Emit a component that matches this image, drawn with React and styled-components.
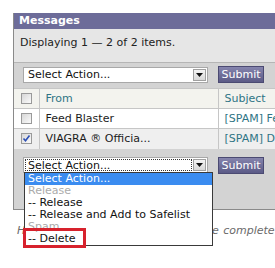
import React from "react";
import styled, { createGlobalStyle } from "styled-components";

const GlobalStyle = createGlobalStyle`
  html, body {
    margin: 0;
    padding: 0;
    background: #ffffff;
  }
  body {
    font-family: "DejaVu Sans", Verdana, sans-serif;
    font-size: 11px;
    color: #222;
  }
`;

const Page = styled.div`
  position: relative;
  width: 275px;
  height: 268px;
  overflow: hidden;
  padding: 13px 0 0 13px;
  box-sizing: border-box;
`;

const Panel = styled.div`
  width: 300px;
  display: flex;
  flex-direction: column;
  border-left: 1px solid #8a8a8a;
  border-bottom: 1px solid #8a8a8a;
  background: #d3d3d3;
`;

const Header = styled.div`
  height: 16px;
  line-height: 16px;
  padding-left: 5px;
  background: #6d6c99;
  color: #ffffff;
  font-weight: bold;
  font-size: 11px;
`;

const InfoRow = styled.div`
  height: 34px;
  display: flex;
  align-items: center;
  padding-left: 6px;
  padding-bottom: 6px;
  background: #e6e6e6;
  border-bottom: 1px solid #b5b5b5;
  font-size: 11px;
  box-sizing: border-box;
`;

const ActionBar = styled.div`
  display: flex;
  align-items: center;
  gap: 10px;
  padding: ${(p) => (p.bottom ? "8px 0 35px 9px" : "3px 0 5px 9px")};
  background: #d3d3d3;
`;

const SelectBox = styled.div`
  width: 185px;
  height: 16px;
  display: flex;
  align-items: center;
  background: #ffffff;
  border: 1px solid #a8a8a8;
  box-sizing: border-box;
  padding: 1px;
`;

const SelectText = styled.div`
  flex: 1;
  height: 100%;
  display: flex;
  align-items: center;
  padding-left: 3px;
  box-sizing: border-box;
  outline: ${(p) => (p.focused ? "1px dotted #333" : "none")};
  outline-offset: -1px;
  font-size: 11px;
  color: #111;
`;

const ArrowButton = styled.div`
  width: 13px;
  height: 12px;
  margin-left: 1px;
  display: flex;
  align-items: center;
  justify-content: center;
  background: linear-gradient(#f4f4f4, #d8d8d8);
  border: 1px solid #a0a0a0;
  box-sizing: border-box;
`;

const SubmitButton = styled.button`
  width: 46px;
  height: 17px;
  padding: 0;
  border: 1px solid #4b4a72;
  background: linear-gradient(#8584ad, #5b5a86);
  color: #ffffff;
  font-family: "DejaVu Sans", Verdana, sans-serif;
  font-size: 11px;
  line-height: 15px;
`;

const Table = styled.table`
  border-collapse: collapse;
  table-layout: fixed;
  width: 100%;
  font-size: 11px;
`;

const Row = styled.tr`
  height: 20px;
  background: ${(p) => p.bg};
`;

const Cell = styled.td`
  padding: 0 0 0 6px;
  border-top: 1px solid #c6c6c6;
  border-left: 1px solid #c6c6c6;
  white-space: nowrap;
  overflow: hidden;
  color: ${(p) => p.color || "#1c1c1c"};
  box-sizing: border-box;
  &:first-child {
    border-left: none;
    padding: 0;
    text-align: center;
  }
`;

const Check = styled.span`
  display: inline-block;
  vertical-align: middle;
  width: 11px;
  height: 11px;
  box-sizing: border-box;
  border: 1px solid #9a9a9a;
  background: linear-gradient(135deg, #d6d6d6, #fbfbfb);
  position: relative;
  margin-top: -2px;
`;

const HelpText = styled.div`
  margin: 14px 0 0 4px;
  font-style: italic;
  color: #6a6a6a;
  white-space: nowrap;
  word-spacing: 0.8px;
  font-size: 11px;
`;

const Dropdown = styled.div`
  position: absolute;
  left: 24px;
  top: 172px;
  width: 189px;
  background: #ffffff;
  border: 1px solid #3a3a3a;
  box-sizing: border-box;
  font-size: 11px;
`;

const Option = styled.div`
  height: 12px;
  line-height: 12px;
  padding-left: 3px;
  white-space: nowrap;
  background: ${(p) => (p.active ? "#3b8cf0" : "transparent")};
  color: ${(p) => (p.active ? "#ffffff" : p.disabled ? "#ababab" : "#111")};
`;

const Highlight = styled.div`
  position: absolute;
  left: 23px;
  top: 228px;
  width: 63px;
  height: 20px;
  border: 3px solid #d7222d;
  box-sizing: border-box;
`;

const Arrow = () => (
  <svg width="7" height="4" viewBox="0 0 7 4">
    <path d="M0 0 H7 L3.5 4 Z" fill="#111" />
  </svg>
);

const CheckMark = () => (
  <svg
    width="9"
    height="9"
    viewBox="0 0 9 9"
    style={{ position: "absolute", left: 0, top: 0 }}
  >
    <path d="M1.5 4.5 L3.5 6.8 L7.5 1.5" stroke="#2c4fb5" strokeWidth="1.6" fill="none" />
  </svg>
);

const ActionSelect = ({ focused }) => (
  <SelectBox>
    <SelectText focused={focused}>Select Action...</SelectText>
    <ArrowButton>
      <Arrow />
    </ArrowButton>
  </SelectBox>
);

const messages = [
  { from: "Feed Blaster", subject: "[SPAM] Feed Blaster Offers", bg: "#ffffff", checked: false },
  { from: "VIAGRA \u00ae Officia...", subject: "[SPAM] Discount Pills", bg: "#efefef", checked: true },
];

const options = [
  { label: "Select Action...", active: true },
  { label: "Release", disabled: true },
  { label: "-- Release" },
  { label: "-- Release and Add to Safelist" },
  { label: "Spam", disabled: true },
  { label: "-- Delete" },
];

export default function App() {
  return (
    <Page>
      <GlobalStyle />
      <Panel>
        <Header>Messages</Header>
        <InfoRow>Displaying 1 — 2 of 2 items.</InfoRow>
        <ActionBar>
          <ActionSelect />
          <SubmitButton>Submit</SubmitButton>
        </ActionBar>
        <Table>
          <colgroup>
            <col style={{ width: 25 }} />
            <col style={{ width: 179 }} />
            <col />
          </colgroup>
          <tbody>
            <Row bg="#f3f3ee">
              <Cell>
                <Check />
              </Cell>
              <Cell color="#2f7585">From</Cell>
              <Cell color="#2f7585">Subject</Cell>
            </Row>
            {messages.map((m) => (
              <Row key={m.from} bg={m.bg}>
                <Cell>
                  <Check>{m.checked && <CheckMark />}</Check>
                </Cell>
                <Cell>{m.from}</Cell>
                <Cell color="#2f7585">{m.subject}</Cell>
              </Row>
            ))}
          </tbody>
        </Table>
        <ActionBar bottom>
          <ActionSelect focused />
          <SubmitButton>Submit</SubmitButton>
        </ActionBar>
      </Panel>
      <HelpText>Hint: click a subject line to view the complete</HelpText>
      <Dropdown>
        {options.map((o) => (
          <Option key={o.label} active={o.active} disabled={o.disabled}>
            {o.label}
          </Option>
        ))}
      </Dropdown>
      <Highlight />
    </Page>
  );
}
